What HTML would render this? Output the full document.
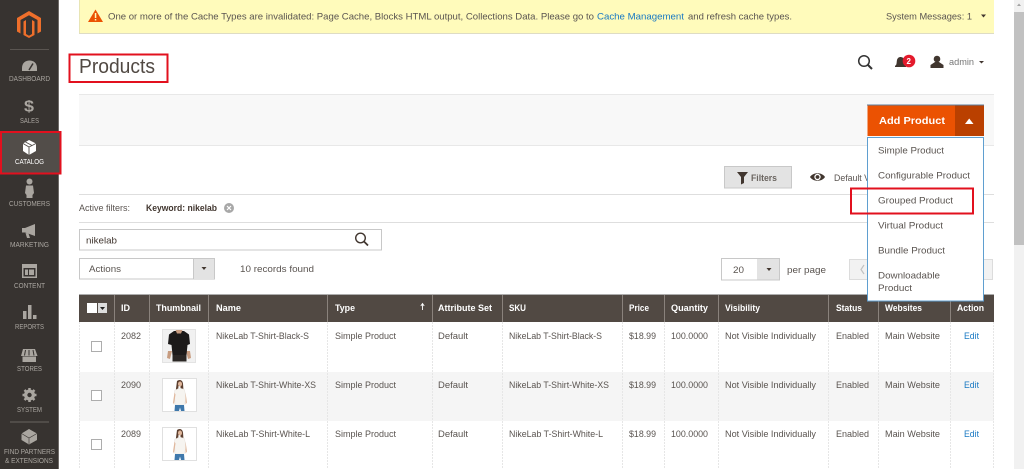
<!DOCTYPE html>
<html><head><meta charset="utf-8"><title>Products</title>
<style>
html,body{margin:0;padding:0;background:#fff;overflow:hidden}
svg{display:block;filter:blur(.35px)}
text{font-family:"Liberation Sans",Arial,sans-serif;font-size:9.4px;fill:#5a5450}
.n{font-size:7px;fill:#aaa6a0}
.h{font-size:9.2px;fill:#fff;font-weight:bold}
.i{fill:#aaa6a0}
.l{fill:#1979c3}
.d{stroke:#e6e6e6;stroke-width:1;stroke-dasharray:2 1}
.hs{stroke:#8a827c;stroke-width:1}
.r{fill:none;stroke:#e2101e;stroke-width:2}
</style></head><body>
<svg xmlns="http://www.w3.org/2000/svg" width="1024" height="469" viewBox="0 0 1024 469">
<defs>
<g id="tw">
<rect x="0" y="0" width="34" height="33" fill="#fff" stroke="#e0e0e0"/>
<path d="M14.500 2.500C17 .5 20 1.500 20.500 5L21 12L18 11V7.500H16L15.500 13L13 14Z" fill="#5d4030"/>
<ellipse cx="17.500" cy="5.500" rx="2" ry="2.500" fill="#e0b79c"/>
<path d="M12 12L17 9.500L22 11L23.500 20L21.500 26.500H12.500Z" fill="#f6f4f0" stroke="#e8e4de" stroke-width=".5"/>
<path d="M12.500 26.500H21.500L22 32.500H18.500L17.500 29L16.500 32.500H12Z" fill="#3f78ab"/>
<path d="M12 14L10.500 24L11.500 26L13 16ZM23 14L24.500 24L23 26Z" fill="#e0b79c"/>
</g>
</defs>

<!-- sidebar -->
<rect x="0" y="0" width="58" height="469" fill="#373330"/>
<rect x="58" y="0" width="1" height="469" fill="#6f6b68"/>
<path d="M29 11L41 18V31.500L37.500 33.500V20L29 15.300L20.500 20V33.500L17 31.500V18Z" fill="#ee6f2b"/>
<path d="M26 20V34L29 35.800L32 34V20L34.500 21.500V35L29 38L23.500 35V21.500Z" fill="#ee6f2b"/>
<rect x="10" y="49" width="39" height="1" fill="#5a5551"/>

<path d="M22 71V68C22 63 25.500 60.500 29.500 60.500S37 63 37 68V71Z" fill="#aaa6a0"/>
<path d="M29 70L33 63.500" stroke="#373330" stroke-width="1.500"/>
<text class="n" x="9" y="81" textLength="41" lengthAdjust="spacingAndGlyphs">DASHBOARD</text>

<text x="24" y="111.500" style="font-size:16px;font-weight:bold;fill:#aaa6a0" textLength="10" lengthAdjust="spacingAndGlyphs">$</text>
<text class="n" x="20" y="123" textLength="19" lengthAdjust="spacingAndGlyphs">SALES</text>

<rect x="0" y="132" width="60" height="42" fill="#524d49"/>
<path d="M29 140L36 143.500V151L29 155L23 151V143.500Z" fill="#fff"/>
<path d="M23 143.500L29 147L36 143.500M29 147V155M25.500 142L32 145.500" stroke="#524d49" stroke-width=".9" fill="none"/>
<text class="n" x="15" y="164" textLength="29" lengthAdjust="spacingAndGlyphs" style="fill:#fff">CATALOG</text>
<rect class="r" x="1" y="132" width="59.500" height="41.500"/>

<circle cx="29.500" cy="181.500" r="3" fill="#aaa6a0"/>
<path d="M26 185.500H33L34 193L32.500 195V198H26.500V195L25 193Z" fill="#aaa6a0"/>
<text class="n" x="9" y="206" textLength="41" lengthAdjust="spacingAndGlyphs">CUSTOMERS</text>

<path d="M22 228H25L35 224V236L25 232.500H22ZM25.500 233L27 238H30L28.500 233.500Z" fill="#aaa6a0"/>
<text class="n" x="10" y="247" textLength="39" lengthAdjust="spacingAndGlyphs">MARKETING</text>

<rect x="22" y="264" width="15" height="14" fill="#aaa6a0"/>
<rect x="23.500" y="268" width="12" height="8.500" fill="#373330"/>
<rect x="25" y="269.500" width="3" height="5.500" fill="#aaa6a0"/>
<rect x="29" y="269.500" width="5" height="5.500" fill="#aaa6a0"/>
<text class="n" x="14" y="288" textLength="31" lengthAdjust="spacingAndGlyphs">CONTENT</text>

<rect x="23" y="311" width="3.500" height="8" fill="#aaa6a0"/>
<rect x="28" y="305" width="3.500" height="14" fill="#aaa6a0"/>
<rect x="33" y="315" width="3.500" height="4" fill="#aaa6a0"/>
<text class="n" x="15" y="329" textLength="29" lengthAdjust="spacingAndGlyphs">REPORTS</text>

<path d="M23 349H35L37.500 356H21Z" fill="#aaa6a0"/>
<path d="M22.500 356.500H36V362H22.500Z" fill="#aaa6a0"/>
<path d="M25.500 350L24.500 355.500M29 350V355.500M33 350L34 355.500" stroke="#373330" stroke-width="1"/>
<text class="n" x="17" y="371" textLength="25" lengthAdjust="spacingAndGlyphs">STORES</text>

<circle cx="29.500" cy="395" r="5.500" fill="#aaa6a0"/>
<path d="M29.500 388V402M22.500 395H36.500M24.500 390L34.500 400M34.500 390L24.500 400" stroke="#aaa6a0" stroke-width="2.500"/>
<circle cx="29.500" cy="395" r="2.200" fill="#373330"/>
<text class="n" x="17" y="412" textLength="25" lengthAdjust="spacingAndGlyphs">SYSTEM</text>

<rect x="10" y="421.500" width="39" height="1" fill="#6a6560"/>
<path d="M29 429L37 433.500V440L29 444.500L21.500 440V433.500Z" fill="#aaa6a0"/>
<path d="M21.500 433.500L29 438L37 433.500M29 438V444" stroke="#373330" stroke-width=".6" fill="none"/>
<text class="n" x="4" y="454" textLength="51" lengthAdjust="spacingAndGlyphs">FIND PARTNERS</text>
<text class="n" x="5" y="463" textLength="48" lengthAdjust="spacingAndGlyphs">&amp; EXTENSIONS</text>

<!-- notice -->
<rect x="79" y="0" width="915" height="33" fill="#fffbbb"/>
<rect x="79" y="33" width="915" height="1" fill="#dedcc4"/>
<rect x="79" y="0" width="1" height="33" fill="#e8e5b5"/>
<path d="M95.500 9.500L103 22H88Z" fill="#eb5202"/>
<rect x="94.800" y="13" width="1.500" height="5" fill="#fffbbb"/>
<rect x="94.800" y="19" width="1.500" height="1.500" fill="#fffbbb"/>
<text x="108" y="19.500" textLength="486" lengthAdjust="spacingAndGlyphs">One or more of the Cache Types are invalidated: Page Cache, Blocks HTML output, Collections Data. Please go to</text>
<text class="l" x="597" y="19.500" textLength="87" lengthAdjust="spacingAndGlyphs">Cache Management</text>
<text x="688" y="19.500" textLength="104" lengthAdjust="spacingAndGlyphs">and refresh cache types.</text>
<text x="886" y="19.500" textLength="86" lengthAdjust="spacingAndGlyphs">System Messages: 1</text>
<path d="M981 14.500H986L983.500 17.500Z" fill="#41362f"/>

<!-- title -->
<text x="79" y="73" style="font-size:20.500px;fill:#514943" textLength="76" lengthAdjust="spacingAndGlyphs">Products</text>
<rect class="r" x="69.500" y="54.500" width="98" height="27.500"/>

<!-- top right -->
<circle cx="864" cy="61" r="5.300" fill="none" stroke="#333" stroke-width="1.500"/>
<path d="M868 65L872 69" stroke="#333" stroke-width="2"/>
<path d="M895.500 66C897 64 896.500 62 897 60C897.500 58 899 57 900.500 57S904 58 904.500 60L905.500 66Z" fill="#41362f"/>
<rect x="895" y="65.500" width="11" height="1.500" fill="#41362f"/>
<circle cx="909" cy="61" r="6.300" fill="#e41a2c"/>
<text x="906.500" y="64" style="font-size:8px;font-weight:bold;fill:#fff">2</text>
<circle cx="937" cy="59" r="3.300" fill="#41362f"/>
<path d="M935 62H939L943.500 65V68H930.500V65Z" fill="#41362f"/>
<text x="949" y="65" textLength="25" lengthAdjust="spacingAndGlyphs" style="fill:#777">admin</text>
<path d="M979 61H984L981.500 63.500Z" fill="#41362f"/>

<!-- action bar -->
<rect x="79" y="94" width="915" height="52" fill="#f8f8f8"/>
<rect x="79" y="94" width="915" height="1" fill="#e8e8e8"/>
<rect x="79" y="145" width="915" height="1" fill="#e8e8e8"/>

<!-- filter row -->
<rect x="724.500" y="166.500" width="67" height="21.500" fill="#e3e3e3" stroke="#c8c8c8"/>
<path d="M737 172H748L744 177V183L741 184.500V177Z" fill="#41362f"/>
<text x="751" y="181" textLength="26" lengthAdjust="spacingAndGlyphs" style="font-weight:bold;fill:#6b6560">Filters</text>
<path d="M810 177C813 172 822 172 825 177C822 182 813 182 810 177Z" fill="#41362f"/>
<circle cx="817.500" cy="177" r="3.200" fill="#fff"/>
<circle cx="817.500" cy="177" r="1.900" fill="#41362f"/>
<text x="834" y="181" textLength="36" lengthAdjust="spacingAndGlyphs">Default V</text>

<rect x="79" y="194" width="915" height="1" fill="#dedede"/>
<rect x="79" y="222" width="915" height="1" fill="#dedede"/>
<text x="79" y="211" textLength="51" lengthAdjust="spacingAndGlyphs">Active filters:</text>
<text x="146" y="211" textLength="71" lengthAdjust="spacingAndGlyphs" style="fill:#41362f;font-weight:bold">Keyword: nikelab</text>
<circle cx="229" cy="208" r="5" fill="#a8a8a8"/>
<path d="M227 206L231 210M231 206L227 210" stroke="#fff" stroke-width="1.200"/>

<rect x="79.500" y="229.500" width="302" height="20.500" fill="#fff" stroke="#c8c8c8"/>
<text x="86" y="243.500" textLength="31" lengthAdjust="spacingAndGlyphs" style="fill:#41362f">nikelab</text>
<circle cx="360.500" cy="238" r="4.800" fill="none" stroke="#41362f" stroke-width="1.400"/>
<path d="M364 241.500L368 245.500" stroke="#41362f" stroke-width="1.800"/>

<rect x="79.500" y="258.500" width="135" height="20.500" fill="#fff" stroke="#c8c8c8"/>
<rect x="193" y="259" width="21" height="20" fill="#e3e3e3"/>
<rect x="193" y="259" width="1" height="20" fill="#c8c8c8"/>
<path d="M201.500 267H206.500L204 270Z" fill="#41362f"/>
<text x="89" y="272" textLength="32" lengthAdjust="spacingAndGlyphs">Actions</text>
<text x="240" y="272" textLength="74" lengthAdjust="spacingAndGlyphs">10 records found</text>

<rect x="721.500" y="258.500" width="58" height="21.500" fill="#fff" stroke="#c8c8c8"/>
<rect x="757" y="259" width="22" height="20.500" fill="#e3e3e3"/>
<path d="M766.500 268H771.500L769 271Z" fill="#41362f"/>
<text x="733" y="273" textLength="11" lengthAdjust="spacingAndGlyphs">20</text>
<text x="787" y="273" textLength="39" lengthAdjust="spacingAndGlyphs">per page</text>
<rect x="849.500" y="259.500" width="143" height="20" fill="#f2f2f2" stroke="#dcdcdc"/>
<path d="M864 265L861 269.500L864 274" fill="none" stroke="#c2c2c2" stroke-width="1.200"/>

<!-- table rows -->
<rect x="79" y="372" width="915" height="49" fill="#f5f5f5"/>
<path class="d" d="M79.500 322V469M114.500 322V469M149.500 322V469M208.500 322V469M327.500 322V469M432.500 322V469M502.500 322V469M622.500 322V469M664.500 322V469M718.500 322V469M828.500 322V469M878.500 322V469M950.500 322V469M993.500 322V469"/>

<!-- table header -->
<rect x="79" y="294" width="915" height="1" fill="#adadad"/>
<rect x="79" y="295" width="915" height="27" fill="#514943"/>
<path class="hs" d="M114.500 295V322M149.500 295V322M208.500 295V322M327.500 295V322M432.500 295V322M502.500 295V322M622.500 295V322M664.500 295V322M718.500 295V322M828.500 295V322M878.500 295V322M950.500 295V322"/>
<rect x="87" y="303" width="10" height="10" fill="#fff"/>
<rect x="98" y="303" width="9" height="10" fill="#ddd"/>
<path d="M100 307H105L102.500 310Z" fill="#222"/>
<text class="h" x="121" y="311" textLength="9" lengthAdjust="spacingAndGlyphs">ID</text>
<text class="h" x="156" y="311" textLength="45" lengthAdjust="spacingAndGlyphs">Thumbnail</text>
<text class="h" x="216" y="311" textLength="25" lengthAdjust="spacingAndGlyphs">Name</text>
<text class="h" x="335" y="311" textLength="20" lengthAdjust="spacingAndGlyphs">Type</text>
<path d="M422.500 310V304M420.800 306L422.500 303.500L424.200 306" stroke="#fff" stroke-width=".9" fill="none"/>
<text class="h" x="438" y="311" textLength="54" lengthAdjust="spacingAndGlyphs">Attribute Set</text>
<text class="h" x="509" y="311" textLength="17" lengthAdjust="spacingAndGlyphs">SKU</text>
<text class="h" x="629" y="311" textLength="20" lengthAdjust="spacingAndGlyphs">Price</text>
<text class="h" x="671" y="311" textLength="37" lengthAdjust="spacingAndGlyphs">Quantity</text>
<text class="h" x="725" y="311" textLength="35" lengthAdjust="spacingAndGlyphs">Visibility</text>
<text class="h" x="836" y="311" textLength="26" lengthAdjust="spacingAndGlyphs">Status</text>
<text class="h" x="885" y="311" textLength="37" lengthAdjust="spacingAndGlyphs">Websites</text>
<text class="h" x="957" y="311" textLength="27" lengthAdjust="spacingAndGlyphs">Action</text>

<!-- row 1 -->
<rect x="91.500" y="341.500" width="10" height="10" fill="#fff" stroke="#adadad"/>
<text x="121" y="339" textLength="20" lengthAdjust="spacingAndGlyphs">2082</text>
<rect x="162.500" y="329.500" width="33" height="33" fill="#f1f1f1" stroke="#e3e3e3"/>
<path d="M168 351L167 358L170 359L172 351ZM190 351L191 358L188 359L186 351Z" fill="#c79c80"/>
<path d="M174 331H184L189 334.500L190 344L187.500 345L186.500 355H172.500L171.500 345L168 344L169 334.500Z" fill="#1c1a1a"/>
<path d="M172.500 355H186.500V361.500H172.500Z" fill="#2a2624"/>
<path d="M175.500 330H182.500L181 333.500H177Z" fill="#c79c80"/>
<text x="216" y="339" textLength="93" lengthAdjust="spacingAndGlyphs">NikeLab T-Shirt-Black-S</text>
<text x="335" y="339" textLength="61" lengthAdjust="spacingAndGlyphs">Simple Product</text>
<text x="438" y="339" textLength="30" lengthAdjust="spacingAndGlyphs">Default</text>
<text x="509" y="339" textLength="93" lengthAdjust="spacingAndGlyphs">NikeLab T-Shirt-Black-S</text>
<text x="629" y="339" textLength="27" lengthAdjust="spacingAndGlyphs">$18.99</text>
<text x="671" y="339" textLength="37" lengthAdjust="spacingAndGlyphs">100.0000</text>
<text x="725" y="339" textLength="91" lengthAdjust="spacingAndGlyphs">Not Visible Individually</text>
<text x="836" y="339" textLength="33" lengthAdjust="spacingAndGlyphs">Enabled</text>
<text x="885" y="339" textLength="55" lengthAdjust="spacingAndGlyphs">Main Website</text>
<text class="l" x="964" y="339" textLength="15" lengthAdjust="spacingAndGlyphs">Edit</text>

<!-- row 2 -->
<rect x="91.500" y="390.500" width="10" height="10" fill="#fff" stroke="#adadad"/>
<text x="121" y="388" textLength="20" lengthAdjust="spacingAndGlyphs">2090</text>
<use href="#tw" x="162.500" y="378.500"/>
<text x="216" y="388" textLength="100" lengthAdjust="spacingAndGlyphs">NikeLab T-Shirt-White-XS</text>
<text x="335" y="388" textLength="61" lengthAdjust="spacingAndGlyphs">Simple Product</text>
<text x="438" y="388" textLength="30" lengthAdjust="spacingAndGlyphs">Default</text>
<text x="509" y="388" textLength="100" lengthAdjust="spacingAndGlyphs">NikeLab T-Shirt-White-XS</text>
<text x="629" y="388" textLength="27" lengthAdjust="spacingAndGlyphs">$18.99</text>
<text x="671" y="388" textLength="37" lengthAdjust="spacingAndGlyphs">100.0000</text>
<text x="725" y="388" textLength="91" lengthAdjust="spacingAndGlyphs">Not Visible Individually</text>
<text x="836" y="388" textLength="33" lengthAdjust="spacingAndGlyphs">Enabled</text>
<text x="885" y="388" textLength="55" lengthAdjust="spacingAndGlyphs">Main Website</text>
<text class="l" x="964" y="388" textLength="15" lengthAdjust="spacingAndGlyphs">Edit</text>

<!-- row 3 -->
<rect x="91.500" y="439.500" width="10" height="10" fill="#fff" stroke="#adadad"/>
<text x="121" y="437" textLength="20" lengthAdjust="spacingAndGlyphs">2089</text>
<use href="#tw" x="162.500" y="427.500"/>
<text x="216" y="437" textLength="94" lengthAdjust="spacingAndGlyphs">NikeLab T-Shirt-White-L</text>
<text x="335" y="437" textLength="61" lengthAdjust="spacingAndGlyphs">Simple Product</text>
<text x="438" y="437" textLength="30" lengthAdjust="spacingAndGlyphs">Default</text>
<text x="509" y="437" textLength="94" lengthAdjust="spacingAndGlyphs">NikeLab T-Shirt-White-L</text>
<text x="629" y="437" textLength="27" lengthAdjust="spacingAndGlyphs">$18.99</text>
<text x="671" y="437" textLength="37" lengthAdjust="spacingAndGlyphs">100.0000</text>
<text x="725" y="437" textLength="91" lengthAdjust="spacingAndGlyphs">Not Visible Individually</text>
<text x="836" y="437" textLength="33" lengthAdjust="spacingAndGlyphs">Enabled</text>
<text x="885" y="437" textLength="55" lengthAdjust="spacingAndGlyphs">Main Website</text>
<text class="l" x="964" y="437" textLength="15" lengthAdjust="spacingAndGlyphs">Edit</text>

<!-- add product button -->
<rect x="867.500" y="105" width="116.500" height="31" fill="#eb5202"/>
<rect x="955" y="105" width="29" height="31" fill="#ba4000"/>
<rect x="867" y="104.500" width="117" height="1" fill="#5b7d9c"/>
<text x="879" y="124" textLength="66" lengthAdjust="spacingAndGlyphs" style="font-size:10.500px;font-weight:bold;fill:#fff">Add Product</text>
<path d="M965 124H973.500L969.200 118.500Z" fill="#fff"/>

<!-- dropdown -->
<rect x="867.500" y="137.500" width="116" height="163.500" fill="#fff" stroke="#5f9fd0"/>
<text x="878" y="153.500" textLength="66" lengthAdjust="spacingAndGlyphs">Simple Product</text>
<text x="878" y="178.500" textLength="92" lengthAdjust="spacingAndGlyphs">Configurable Product</text>
<text x="878" y="203.500" textLength="75" lengthAdjust="spacingAndGlyphs">Grouped Product</text>
<text x="878" y="228.500" textLength="65" lengthAdjust="spacingAndGlyphs">Virtual Product</text>
<text x="878" y="253.500" textLength="67" lengthAdjust="spacingAndGlyphs">Bundle Product</text>
<text x="878" y="278.500" textLength="62" lengthAdjust="spacingAndGlyphs">Downloadable</text>
<text x="878" y="291" textLength="34" lengthAdjust="spacingAndGlyphs">Product</text>
<rect class="r" x="851" y="188.500" width="122" height="25"/>

<!-- scrollbar -->
<rect x="1014" y="0" width="10" height="469" fill="#f1f1f1"/>
<rect x="1014" y="12" width="10" height="233" fill="#c1c1c1"/>
<path d="M1017 6H1021L1019 3.500Z" fill="#a3a3a3"/>
</svg>
</body></html>
